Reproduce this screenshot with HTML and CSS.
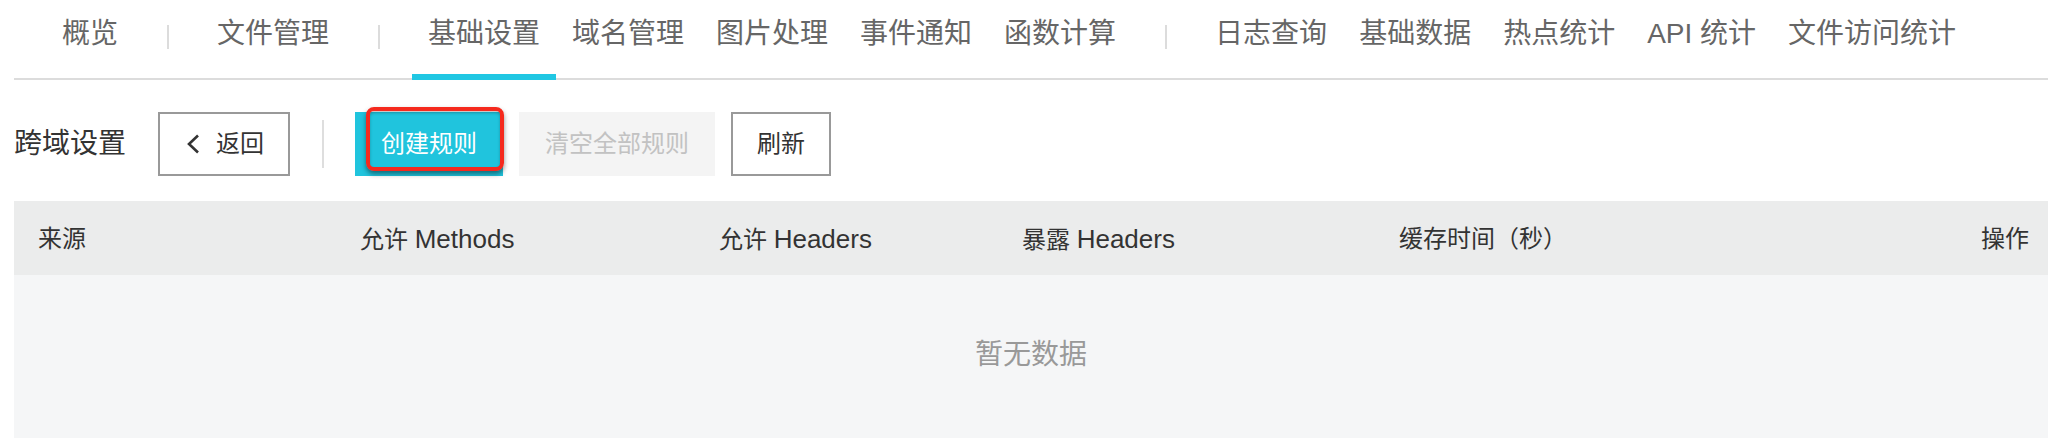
FILE: index.html
```html
<!DOCTYPE html>
<html lang="zh-CN">
<head>
<meta charset="utf-8">
<title>跨域设置</title>
<link rel="stylesheet" href="styles.css">
</head>
<body>
<div class="page">
  <nav class="tabs">
    <a class="tab">概览</a>
    <span class="tab-sep"></span>
    <a class="tab">文件管理</a>
    <span class="tab-sep"></span>
    <a class="tab active">基础设置</a>
    <a class="tab">域名管理</a>
    <a class="tab">图片处理</a>
    <a class="tab">事件通知</a>
    <a class="tab">函数计算</a>
    <span class="tab-sep"></span>
    <a class="tab">日志查询</a>
    <a class="tab">基础数据</a>
    <a class="tab">热点统计</a>
    <a class="tab">API 统计</a>
    <a class="tab">文件访问统计</a>
  </nav>

  <div class="toolbar">
    <h2 class="title">跨域设置</h2>
    <button class="btn btn-line">
      <svg class="chev" width="14" height="20" viewBox="0 0 14 20"><path d="M12 1.5 L3 10 L12 18.5" fill="none" stroke="#333" stroke-width="2.6"/></svg>
      <span>返回</span>
    </button>
    <span class="tool-sep"></span>
    <div class="highlight-wrap">
      <button class="btn btn-primary">创建规则</button>
      <span class="annot"></span>
    </div>
    <button class="btn btn-disabled">清空全部规则</button>
    <button class="btn btn-line">刷新</button>
  </div>

  <div class="table">
    <div class="thead">
      <div class="th">来源</div>
      <div class="th">允许 <span class="en">Methods</span></div>
      <div class="th">允许 <span class="en">Headers</span></div>
      <div class="th">暴露 <span class="en">Headers</span></div>
      <div class="th">缓存时间（秒）</div>
      <div class="th th-right">操作</div>
    </div>
    <div class="tbody">
      <span class="empty">暂无数据</span>
    </div>
  </div>
</div>
</body>
</html>
```

FILE: styles.css
```css
* { box-sizing: border-box; }
html, body { margin: 0; padding: 0; background: #fff; }
body {
  font-family: "Liberation Sans", "Noto Sans CJK SC", sans-serif;
  color: #333;
  overflow: hidden;
  height: 438px;
}
.page {
  padding: 0 10px 0 14px;
}

/* tabs */
.tabs {
  display: flex;
  align-items: center;
  height: 80px;
  padding-left: 32px;
  border-bottom: 2px solid #dcdcdc;
}
.tab {
  display: flex;
  align-items: center;
  height: 80px;
  margin-bottom: -2px;
  padding: 0 16px 6px;
  border-bottom: 6px solid transparent;
  font-size: 28px;
  line-height: 40px;
  color: #666;
  white-space: nowrap;
}
.tab.active {
  border-bottom-color: #20c7e3;
}
.tab-sep {
  width: 2px;
  height: 24px;
  margin: 0 32.5px 4px 32.5px;
  background: #dcdcdc;
}

/* toolbar */
.toolbar {
  display: flex;
  align-items: center;
  margin-top: 32px;
  height: 64px;
}
.title {
  margin: 0 32px 0 0;
  font-size: 28px;
  font-weight: normal;
  line-height: 40px;
  color: #333;
}
.btn {
  display: flex;
  align-items: center;
  height: 64px;
  padding: 0 24px;
  border: 2px solid #999;
  background: #fff;
  font-family: inherit;
  font-size: 24px;
  line-height: 32px;
  color: #333;
  margin-right: 16px;
}
.btn-line .chev { margin: 0 16px 0 2px; }
.tool-sep {
  width: 2px;
  height: 48px;
  margin: 0 31px 0 16px;
  background: #dedede;
}
.highlight-wrap {
  position: relative;
  margin-right: 16px;
}
.btn-primary {
  margin-right: 0;
  background: #20c4dd;
  border-color: #20c4dd;
  color: #fff;
}
.annot {
  position: absolute;
  left: 11px;
  top: -5px;
  width: 138px;
  height: 64px;
  border: 4px solid #f52a1e;
  border-radius: 8px;
  box-shadow: 0 3px 5px rgba(0, 0, 0, 0.45), inset 0 2px 3px rgba(0, 0, 0, 0.25);
}
.btn-disabled {
  background: #f4f4f4;
  border-color: #f4f4f4;
  color: #c2c2c2;
}

/* table */
.table {
  margin-top: 25px;
}
.thead {
  display: grid;
  grid-template-columns: 322px 359px 303px 377px 1fr auto;
  align-items: center;
  height: 74px;
  padding-top: 2px;
  background: #ebecec;
}
.th {
  padding: 0 24px;
  font-size: 24px;
  line-height: 32px;
  color: #333;
  white-space: nowrap;
}
.th .en { font-size: 26px; }
.th-right { padding-right: 19px; }
.tbody {
  display: flex;
  justify-content: center;
  align-items: flex-start;
  height: 180px;
  padding-top: 60px;
  background: #f5f6f7;
}
.empty {
  font-size: 28px;
  line-height: 40px;
  color: #999;
}
```
